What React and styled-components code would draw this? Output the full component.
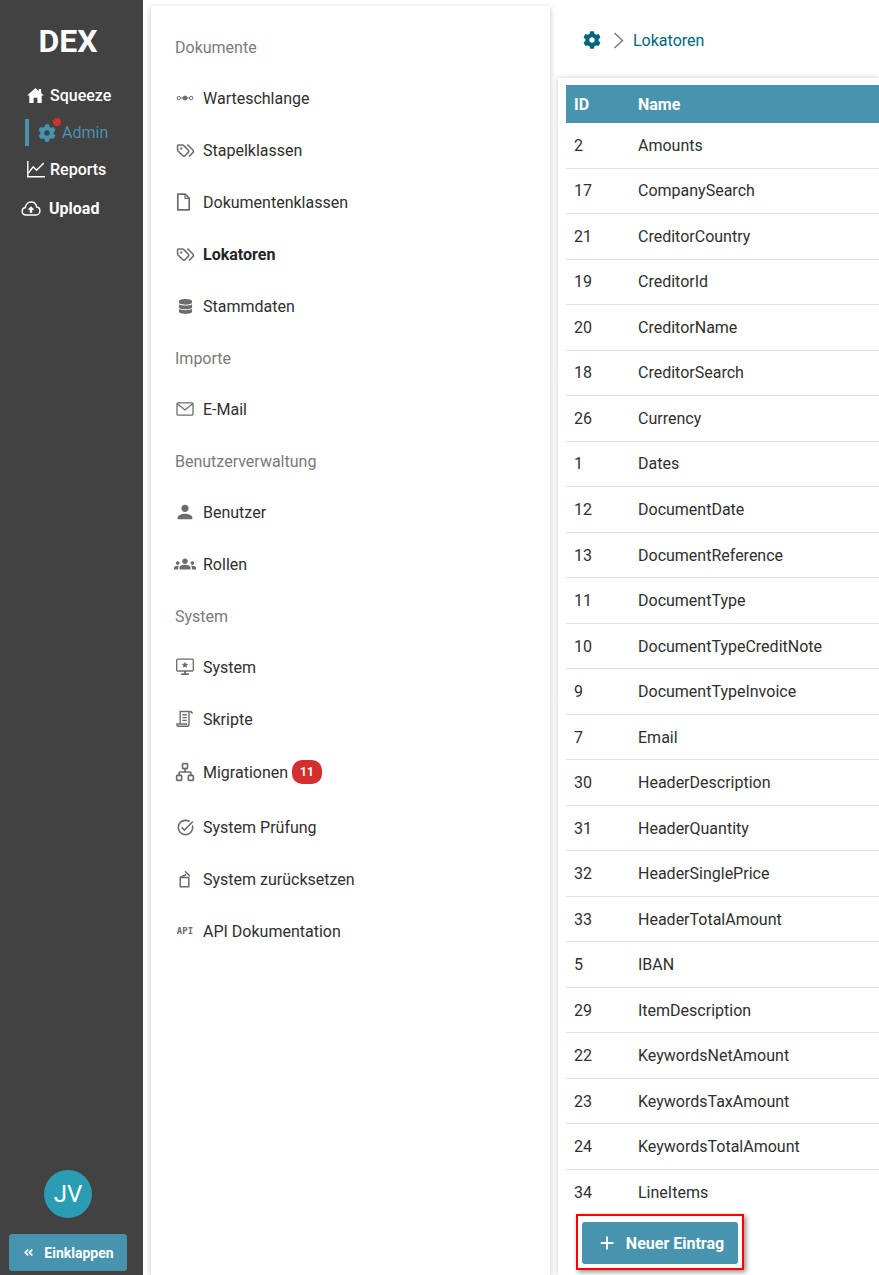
import React from 'react'
import styled, { createGlobalStyle } from 'styled-components'
import { FaCog, FaDatabase, FaAngleDoubleLeft } from 'react-icons/fa'
import { MdPerson, MdGroups, MdOutlineTaskAlt, MdAdd } from 'react-icons/md'
import { LuTags, LuNetwork } from 'react-icons/lu'

const GlobalStyle = createGlobalStyle`
  html, body { margin: 0; padding: 0; height: 100%; overflow: hidden; background: #fff; }
  body { font-family: Roboto, "Liberation Sans", sans-serif; color: #212529; }
  * { box-sizing: border-box; }
`

const HomeIcon = () => (
  <svg width="17" height="15" viewBox="0 0 18 16" fill="#fff">
    <path d="M9 0 12.600 3.200V1H15V5.300L18 8H15.600V16H11V10.500H7V16H2.400V8H0z" />
  </svg>
)

const QueueIcon = () => (
  <svg width="18" height="18" viewBox="0 0 18 18" fill="none" stroke="#6c6c6c" strokeWidth="1">
    <circle cx="2.800" cy="9" r="1.700" />
    <circle cx="9" cy="9" r="2" fill="#6c6c6c" />
    <circle cx="15.200" cy="9" r="1.700" />
    <path d="M4.500 9H7M11 9h2.500" />
  </svg>
)

const FileIcon = () => (
  <svg width="18" height="18" viewBox="0 0 18 18" fill="none" stroke="#6c6c6c" strokeWidth="1.700" strokeLinejoin="round">
    <path d="M1.800 1.200h7.400l4 4v11.600H1.800z" />
    <path d="M9 1.400v4h4" strokeWidth="1.200" />
  </svg>
)

const MailIcon = () => (
  <svg width="18" height="18" viewBox="0 0 18 18" fill="none" stroke="#6c6c6c" strokeWidth="1.300">
    <rect x="1" y="2.800" width="16" height="12.400" rx="1" />
    <path d="M1.400 3.800 9 10l7.600-6.200" />
  </svg>
)

const MonitorIcon = () => (
  <svg width="18" height="18" viewBox="0 0 18 18" fill="none" stroke="#6c6c6c" strokeWidth="1.300">
    <rect x="0.700" y="1.200" width="16.600" height="11.800" rx="1" />
    <path d="M9 13v2.800M5.200 16.200h7.600" strokeWidth="1.800" />
    <path d="m9 3.800 1 2 2.200.3-1.600 1.500.4 2.200L9 8.800l-2 1 .4-2.200-1.600-1.500 2.200-.3z" fill="#6c6c6c" stroke="none" />
  </svg>
)

const ScriptIcon = () => (
  <svg width="18" height="18" viewBox="0 0 18 18" fill="none" stroke="#6c6c6c" strokeWidth="1.400">
    <path d="M4.200 13.500V1.500h9.600" />
    <path d="M13 1.500v12.700c0 1.200-.8 2.100-2 2.100H2.200c-.8 0-1.200-.7-1.200-1.400V14h9.400v1" />
    <path d="M13.800 1.500c1.400 0 2.400.7 2.400 2.200" />
    <path d="M6.400 4.800h4.400M6.400 7.600h4.400M6.400 10.400h4.400" />
  </svg>
)

const ResetIcon = () => (
  <svg width="18" height="18" viewBox="0 0 18 18" fill="none" stroke="#6c6c6c" strokeWidth="1.500" strokeLinejoin="round">
    <path d="M4.200 7.500h8.600v9.200H4.200z" />
    <path d="M4.200 7.500 10 4.500M9 1.200l5 5" />
  </svg>
)

const ChartIcon = () => (
  <svg width="18" height="17" viewBox="0 0 18 17" fill="none" stroke="#fff" strokeWidth="1.400">
    <path d="M.800 0v15.800H18" />
    <path d="m1.400 12 4.800-6.200 3.400 3.400L16.800 2" />
  </svg>
)

const UploadIcon = () => (
  <svg width="20" height="15" viewBox="0 0 20 15.500" fill="none" stroke="#fff" strokeWidth="1.500" strokeLinejoin="round">
    <path d="M5 14.400c-2.200 0-4.100-1.500-4.100-3.800 0-2 1.400-3.500 3.200-3.800C4.600 3.400 7.200 1 10 1c3 0 5.400 2.200 5.800 5.300 1.900.2 3.400 1.800 3.400 4 0 2.300-1.800 4.100-4 4.100z" />
    <path d="M10 5.400 13.600 9h-2.300v3.200H8.700V9H6.400z" fill="#fff" stroke="none" />
  </svg>
)

const ChevronIcon = () => (
  <svg width="11" height="17" viewBox="0 0 11 17" fill="none" stroke="#7a7a7a" strokeWidth="1.500">
    <path d="m1.500 1 8 7.500-8 7.500" />
  </svg>
)

const Page = styled.div`
  display: flex;
  height: 1275px;
  overflow: hidden;
`

const Sidebar = styled.aside`
  flex: 0 0 143px;
  display: flex;
  flex-direction: column;
  background: #424242;
  padding-bottom: 4px;
`

const Logo = styled.div`
  margin-top: 22px;
  padding-right: 7px;
  text-align: center;
  font-size: 32px;
  line-height: 38px;
  font-weight: 700;
  color: #fff;
`

const SideNav = styled.nav`
  margin-top: 17px;
  display: flex;
  flex-direction: column;
`

const SideLink = styled.div`
  position: relative;
  height: ${p => p.$height || 37}px;
  padding-left: ${p => p.$indent}px;
  display: flex;
  align-items: center;
  gap: ${p => p.$gap || 5}px;
  font-size: 16px;
  color: ${p => (p.$active ? '#4893ad' : '#fff')};
  font-weight: ${p => (p.$active ? 400 : p.$bold ? 700 : 500)};
`

const ActiveBar = styled.span`
  position: absolute;
  left: 25px;
  top: 5px;
  width: 4px;
  height: 27px;
  background: #4893ad;
`

const GearWrap = styled.span`
  position: relative;
  display: flex;
  font-size: 18px;
`

const Dot = styled.span`
  position: absolute;
  top: -6px;
  right: -5px;
  width: 8px;
  height: 8px;
  border-radius: 50%;
  background: #d32f2f;
`

const SideFoot = styled.div`
  margin-top: auto;
  padding-right: 7px;
  display: flex;
  flex-direction: column;
  align-items: center;
  gap: 16px;
`

const Avatar = styled.div`
  width: 48px;
  height: 48px;
  border-radius: 50%;
  background: #2a9cb3;
  color: #fff;
  font-size: 24px;
  display: flex;
  align-items: center;
  justify-content: center;
`

const CollapseButton = styled.button`
  width: 118px;
  height: 37px;
  padding: 0 0 0 1px;
  border: 0;
  border-radius: 3px;
  background: #4893ad;
  color: #fff;
  font-family: inherit;
  font-size: 14px;
  font-weight: 700;
  display: flex;
  align-items: center;
  justify-content: center;
  gap: 10px;
`

const MenuPanel = styled.section`
  flex: 0 0 399px;
  margin: 6px 0 0 8px;
  padding-top: 15px;
  background: #fff;
  box-shadow: 0 2px 6px rgba(0, 0, 0, 0.25);
`

const MenuHead = styled.div`
  height: 51px;
  padding: 1px 0 0 24px;
  display: flex;
  align-items: center;
  font-size: 16px;
  color: #7a7a7a;
`

const MenuItem = styled.div`
  display: flex;
  align-items: center;
  height: ${p => p.$height || 52}px;
  padding: 0 0 ${p => p.$lift || 0}px 24px;
  font-size: 16px;
  font-weight: ${p => (p.$active ? 700 : 400)};
  color: ${p => (p.$active ? '#212529' : '#2f2f2f')};
`

const MenuIcon = styled.span`
  flex: 0 0 28px;
  min-width: 0;
  padding-right: 8px;
  display: flex;
  align-items: center;
  justify-content: center;
  color: #6c6c6c;
  font-size: 18px;

  svg {
    flex: none;
  }
`

const ApiMark = styled.span`
  font-family: "DejaVu Sans Mono", monospace;
  font-size: 9px;
  font-weight: 700;
  color: #6c6c6c;
`

const Badge = styled.span`
  margin-left: 4px;
  padding: 0 8px;
  height: 24px;
  border-radius: 10px;
  background: #d32f2f;
  color: #fff;
  font-size: 12px;
  font-weight: 700;
  display: flex;
  align-items: center;
`

const Content = styled.main`
  flex: 1;
  min-width: 0;
  margin-left: 8px;
  display: flex;
  flex-direction: column;
`

const Crumbs = styled.div`
  height: 78px;
  padding: 2px 0 0 25px;
  display: flex;
  align-items: center;
  font-size: 16px;
  color: #00667f;
  background: #fff;
`

const CrumbGear = styled.span`
  display: flex;
  font-size: 18px;
  color: #00667f;
`

const CrumbSep = styled.span`
  display: flex;
  margin: 0 9px 0 12px;
`

const TableCard = styled.div`
  flex: 1;
  padding: 7px 0 0 8px;
  background: #fff;
  box-shadow: 0 0 6px rgba(0, 0, 0, 0.2);
`

const Table = styled.table`
  width: 100%;
  border-collapse: collapse;
  table-layout: fixed;
  font-size: 16px;
`

const HeadCell = styled.th`
  width: ${p => p.$width || 'auto'};
  height: 38px;
  padding: 0 8px;
  text-align: left;
  font-weight: 700;
  color: #fff;
  background: #4893ad;
`

const Cell = styled.td`
  height: ${p => (p.$tall ? 46 : 45)}px;
  padding: ${p => (p.$low ? 1 : 0)}px 8px 0;
  color: #2f2f2f;
  border-bottom: ${p => (p.$last ? 0 : 1)}px solid #dee2e6;
`

const NewFrame = styled.div`
  margin: 0 0 0 10px;
  width: 168px;
  height: 56px;
  padding: 6px 4px 4px;
  border: 2px solid #f00;
  box-shadow: 2px 2px 5px rgba(0, 0, 0, 0.45);
`

const NewButton = styled.button`
  width: 100%;
  height: 100%;
  border: 0;
  border-radius: 3px;
  background: #4893ad;
  color: #fff;
  font-family: inherit;
  font-size: 16px;
  font-weight: 700;
  display: flex;
  align-items: center;
  justify-content: center;
  gap: 8px;
`

const rows = [
  [2, 'Amounts'], [17, 'CompanySearch'], [21, 'CreditorCountry'], [19, 'CreditorId'],
  [20, 'CreditorName'], [18, 'CreditorSearch'], [26, 'Currency'], [1, 'Dates'],
  [12, 'DocumentDate'], [13, 'DocumentReference'], [11, 'DocumentType'],
  [10, 'DocumentTypeCreditNote'], [9, 'DocumentTypeInvoice'], [7, 'Email'],
  [30, 'HeaderDescription'], [31, 'HeaderQuantity'], [32, 'HeaderSinglePrice'],
  [33, 'HeaderTotalAmount'], [5, 'IBAN'], [29, 'ItemDescription'],
  [22, 'KeywordsNetAmount'], [23, 'KeywordsTaxAmount'], [24, 'KeywordsTotalAmount'],
  [34, 'LineItems'],
]

export default function App() {
  return (
    <Page>
      <GlobalStyle />
      <Sidebar>
        <Logo>DEX</Logo>
        <SideNav>
          <SideLink $indent={27} $gap={6}><HomeIcon />Squeeze</SideLink>
          <SideLink $active $indent={38} $gap={6}>
            <ActiveBar />
            <GearWrap><FaCog /><Dot /></GearWrap>
            Admin
          </SideLink>
          <SideLink $indent={27}><ChartIcon />Reports</SideLink>
          <SideLink $bold $height={41} $gap={8} $indent={21}><UploadIcon />Upload</SideLink>
        </SideNav>
        <SideFoot>
          <Avatar>JV</Avatar>
          <CollapseButton><FaAngleDoubleLeft size={11} />Einklappen</CollapseButton>
        </SideFoot>
      </Sidebar>

      <MenuPanel>
        <MenuHead>Dokumente</MenuHead>
        <MenuItem><MenuIcon><QueueIcon /></MenuIcon>Warteschlange</MenuItem>
        <MenuItem><MenuIcon><LuTags size={19} /></MenuIcon>Stapelklassen</MenuItem>
        <MenuItem><MenuIcon><FileIcon /></MenuIcon>Dokumentenklassen</MenuItem>
        <MenuItem $active><MenuIcon><LuTags size={19} /></MenuIcon>Lokatoren</MenuItem>
        <MenuItem><MenuIcon><FaDatabase size={15} /></MenuIcon>Stammdaten</MenuItem>
        <MenuHead>Importe</MenuHead>
        <MenuItem><MenuIcon><MailIcon /></MenuIcon>E-Mail</MenuItem>
        <MenuHead>Benutzerverwaltung</MenuHead>
        <MenuItem><MenuIcon><MdPerson size={22} /></MenuIcon>Benutzer</MenuItem>
        <MenuItem><MenuIcon><MdGroups size={22} /></MenuIcon>Rollen</MenuItem>
        <MenuHead>System</MenuHead>
        <MenuItem><MenuIcon><MonitorIcon /></MenuIcon>System</MenuItem>
        <MenuItem><MenuIcon><ScriptIcon /></MenuIcon>Skripte</MenuItem>
        <MenuItem $height={56} $lift={2}><MenuIcon><LuNetwork size={20} /></MenuIcon>Migrationen<Badge>11</Badge></MenuItem>
        <MenuItem><MenuIcon><MdOutlineTaskAlt size={19} /></MenuIcon>System Prüfung</MenuItem>
        <MenuItem><MenuIcon><ResetIcon /></MenuIcon>System zurücksetzen</MenuItem>
        <MenuItem><MenuIcon><ApiMark>API</ApiMark></MenuIcon>API Dokumentation</MenuItem>
      </MenuPanel>

      <Content>
        <Crumbs>
          <CrumbGear><FaCog /></CrumbGear>
          <CrumbSep><ChevronIcon /></CrumbSep>
          Lokatoren
        </Crumbs>
        <TableCard>
          <Table>
            <thead>
              <tr>
                <HeadCell $width="64px">ID</HeadCell>
                <HeadCell>Name</HeadCell>
              </tr>
            </thead>
            <tbody>
              {rows.map(([id, name], i) => {
                const tall = i > 0 && i % 2 === 0
                const low = i >= 9 && i % 2 === 1
                const last = i === rows.length - 1
                return (
                  <tr key={id}>
                    <Cell $tall={tall} $low={low} $last={last}>{id}</Cell>
                    <Cell $tall={tall} $low={low} $last={last}>{name}</Cell>
                  </tr>
                )
              })}
            </tbody>
          </Table>
          <NewFrame>
            <NewButton><MdAdd size={22} />Neuer Eintrag</NewButton>
          </NewFrame>
        </TableCard>
      </Content>
    </Page>
  )
}
